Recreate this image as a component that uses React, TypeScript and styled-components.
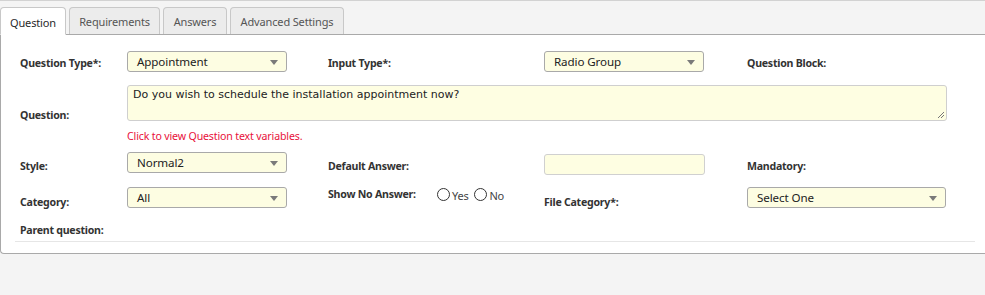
import React from "react";
import styled, { createGlobalStyle } from "styled-components";

const Global = createGlobalStyle`
  html, body { margin: 0; padding: 0; }
  body {
    background: #f4f4f4;
    font-family: "Noto Sans", "Open Sans", Arial, sans-serif;
    color: #333;
  }
`;

const Page = styled.div`
  width: 985px;
  height: 295px;
  border-top: 1px solid #d2d2d2;
  box-sizing: border-box;
  background: #f4f4f4;
  overflow: hidden;
`;

const TabBar = styled.div`
  display: flex;
  align-items: flex-end;
  gap: 3px;
  height: 34px;
  box-sizing: border-box;
  border-bottom: 1px solid #a9a9a9;
`;

const Tab = styled.div<{ $active?: boolean; $w: number }>`
  box-sizing: border-box;
  width: ${(p) => p.$w}px;
  height: ${(p) => (p.$active ? 28 : 27)}px;
  margin-bottom: ${(p) => (p.$active ? -1 : 0)}px;
  border: 1px solid #c8c8c8;
  border-bottom: ${(p) => (p.$active ? "1px solid #fff" : "none")};
  border-radius: 4px 4px 0 0;
  background: ${(p) => (p.$active ? "#fff" : "#ececec")};
  color: ${(p) => (p.$active ? "#2a2a2a" : "#555")};
  font-size: 11px;
  letter-spacing: -0.15px;
  display: flex;
  justify-content: center;
  align-items: center;
  padding-top: ${(p) => (p.$active ? 2 : 0)}px;
`;

const Panel = styled.div`
  background: #fff;
  border-left: 1px solid #a9a9a9;
  border-bottom: 1px solid #a9a9a9;
  border-radius: 0 0 0 4px;
  padding-top: 11px;
  padding-bottom: 11px;
`;

const Form = styled.div`
  display: grid;
  grid-template-columns: 107px 201px 216px 203px 1fr;
  grid-template-rows: 32px 43px 24px 38px 32px 26px;
  padding-left: 19px;
`;

const Label = styled.div<{ $col: number; $row: string; $pt?: number; $align?: string }>`
  grid-column: ${(p) => p.$col};
  grid-row: ${(p) => p.$row};
  align-self: ${(p) => p.$align || "center"};
  padding-top: ${(p) => p.$pt ?? 4}px;
  font-size: 10.6px;
  letter-spacing: -0.25px;
  font-weight: 700;
  color: #333;
  line-height: 15px;
  white-space: nowrap;
`;

const Cell = styled.div<{ $col: string; $row: string; $mt?: number; $align?: string }>`
  grid-column: ${(p) => p.$col};
  grid-row: ${(p) => p.$row};
  align-self: ${(p) => p.$align || "start"};
  margin-top: ${(p) => p.$mt ?? 0}px;
  display: flex;
  align-items: center;
`;

const SelectBox = styled.div<{ $w: number }>`
  box-sizing: border-box;
  width: ${(p) => p.$w}px;
  height: 21px;
  border: 1px solid #a9a9a9;
  border-radius: 3px;
  background: #fdfde2;
  display: flex;
  align-items: center;
  justify-content: space-between;
  padding: 0 8px 0 9px;
  font-size: 11.6px;
  letter-spacing: -0.1px;
  color: #222;
`;

const Caret = styled.span`
  width: 0;
  height: 0;
  border-left: 4px solid transparent;
  border-right: 4px solid transparent;
  border-top: 5px solid #7a7a7a;
  margin-top: 2px;
`;

const TextInput = styled.div`
  box-sizing: border-box;
  width: 161px;
  height: 21px;
  border: 1px solid #d0d0d0;
  border-radius: 3px;
  background: #fefee2;
`;

const TextArea = styled.div`
  position: relative;
  box-sizing: border-box;
  width: 820px;
  height: 36px;
  border: 1px solid #cfcfcf;
  border-radius: 3px;
  background: #fefee2;
  padding: 2px 5px;
  font-family: "DejaVu Sans", Verdana, sans-serif;
  font-size: 11px;
  color: #222;
  line-height: 14px;
`;

const Grip = styled.svg`
  position: absolute;
  right: 1px;
  bottom: 1px;
`;

const Link = styled.div`
  grid-column: 2 / 4;
  grid-row: 3;
  align-self: end;
  margin-bottom: 1px;
  font-size: 10.6px;
  letter-spacing: -0.15px;
  line-height: 15px;
  color: #e8103a;
  cursor: pointer;
`;

const RadioGroup = styled.div`
  display: flex;
  align-items: center;
  font-size: 11px;
  font-weight: 400;
  color: #444;
`;

const RadioItem = styled.label`
  display: flex;
  align-items: center;
  margin-right: 6px;
`;

const RadioCircle = styled.span`
  box-sizing: border-box;
  width: 13px;
  height: 13px;
  border: 1px solid #333;
  border-radius: 50%;
  margin-right: 2px;
  background: #fff;
`;

const RadioText = styled.span`
  padding-top: 3px;
`;

const Divider = styled.div`
  height: 1px;
  background: #e6e6e6;
  margin: 0 10px 0 14px;
`;

const ShowNo = styled.div`
  display: flex;
  align-items: center;
`;

const ShowNoText = styled.span`
  width: 109px;
`;

function Select({ value, w }: { value: string; w: number }) {
  return (
    <SelectBox $w={w}>
      <span>{value}</span>
      <Caret />
    </SelectBox>
  );
}

function RadioLine() {
  return (
    <ShowNo>
      <ShowNoText>Show No Answer:</ShowNoText>
      <RadioGroup>
        <RadioItem><RadioCircle /><RadioText>Yes</RadioText></RadioItem>
        <RadioItem><RadioCircle /><RadioText>No</RadioText></RadioItem>
      </RadioGroup>
    </ShowNo>
  );
}

export default function App() {
  return (
    <>
      <Global />
      <Page>
        <TabBar>
          <Tab $active $w={66}>Question</Tab>
          <Tab $w={91}>Requirements</Tab>
          <Tab $w={64}>Answers</Tab>
          <Tab $w={114}>Advanced Settings</Tab>
        </TabBar>
        <Panel>
          <Form>
            <Label $col={1} $row="1" $pt={3}>Question Type*:</Label>
            <Cell $col="2" $row="1" $mt={5}><Select value="Appointment" w={160} /></Cell>
            <Label $col={3} $row="1" $pt={3}>Input Type*:</Label>
            <Cell $col="4" $row="1" $mt={5}><Select value="Radio Group" w={160} /></Cell>
            <Label $col={5} $row="1" $pt={3}>Question Block:</Label>

            <Label $col={1} $row="2 / 4" $pt={7}>Question:</Label>
            <Cell $col="2 / 6" $row="2" $align="end">
              <TextArea>
                Do you wish to schedule the installation appointment now?
                <Grip width="9" height="9" viewBox="0 0 9 9">
                  <path d="M8 2 L2 8 M8 5 L5 8" stroke="#777" strokeWidth="1" />
                </Grip>
              </TextArea>
            </Cell>
            <Link>Click to view Question text variables.</Link>

            <Label $col={1} $row="4">Style:</Label>
            <Cell $col="2" $row="4" $mt={7}><Select value="Normal2" w={160} /></Cell>
            <Label $col={3} $row="4">Default Answer:</Label>
            <Cell $col="4" $row="4" $mt={9}><TextInput /></Cell>
            <Label $col={5} $row="4">Mandatory:</Label>

            <Label $col={1} $row="5" $pt={6}>Category:</Label>
            <Cell $col="2" $row="5" $mt={4}><Select value="All" w={160} /></Cell>
            <Label $col={3} $row="5" $align="start" $pt={2}>
              <RadioLine />
            </Label>
            <Label $col={4} $row="5" $pt={7}>File Category*:</Label>
            <Cell $col="5" $row="5" $mt={4}><Select value="Select One" w={199} /></Cell>

            <Label $col={1} $row="6" $pt={4}>Parent question:</Label>
          </Form>
          <Divider />
        </Panel>
      </Page>
    </>
  );
}
